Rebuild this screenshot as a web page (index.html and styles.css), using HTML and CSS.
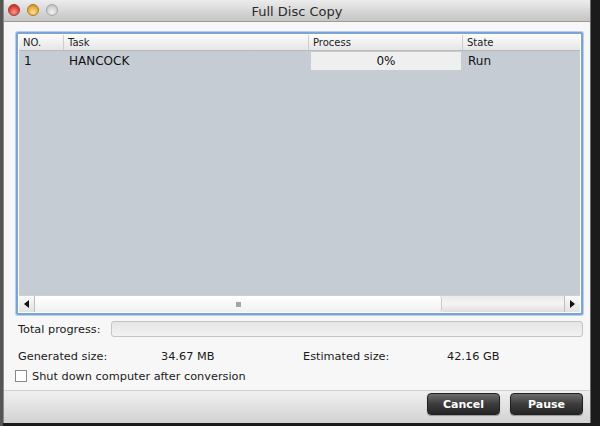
FILE: index.html
```html
<!DOCTYPE html>
<html>
<head>
<meta charset="utf-8">
<link rel="stylesheet" href="styles.css">
</head>
<body>
<div class="desk">
  <div class="window">
    <div class="titlebar">
      <div class="lights">
        <span class="light red"></span>
        <span class="light yellow"></span>
        <span class="light gray"></span>
      </div>
      <div class="title">Full Disc Copy</div>
    </div>
    <div class="content">
      <div class="tableframe">
        <div class="table">
          <div class="thead">
            <div class="th c-no">NO.</div>
            <div class="th c-task">Task</div>
            <div class="th c-proc">Process</div>
            <div class="th c-state">State</div>
          </div>
          <div class="row">
            <div class="td c-no">1</div>
            <div class="td c-task">HANCOCK</div>
            <div class="td c-proc"><div class="pcell">0%</div></div>
            <div class="td c-state">Run</div>
          </div>
          <div class="tbody-fill"></div>
          <div class="hscroll">
            <div class="sarrow left"><span class="tri-l"></span></div>
            <div class="track">
              <div class="thumb"><span class="grip"></span></div>
              <div class="rest"></div>
            </div>
            <div class="sarrow right"><span class="tri-r"></span></div>
          </div>
        </div>
      </div>
      <div class="progress-row">
        <span class="label">Total progress:</span>
        <div class="pbar"></div>
      </div>
      <div class="sizes">
        <span class="s-label">Generated size:</span>
        <span class="s-val">34.67 MB</span>
        <span class="s-label2">Estimated size:</span>
        <span class="s-val2">42.16 GB</span>
      </div>
      <label class="check-row">
        <span class="checkbox"></span>
        <span>Shut down computer after conversion</span>
      </label>
    </div>
    <div class="footer">
      <button class="btn">Cancel</button>
      <button class="btn">Pause</button>
    </div>
  </div>
</div>
</body>
</html>
```
FILE: styles.css
```css
html, body {
  margin: 0;
  padding: 0;
  width: 600px;
  height: 426px;
  overflow: hidden;
  background: #2a2a2a;
  font-family: "DejaVu Sans", sans-serif;
  font-size: 11.3px;
  color: #1a1a1a;
}
.desk {
  display: flex;
  padding-left: 3px;
  height: 426px;
  background: linear-gradient(90deg, #555 0, #555 3px, #1b1b1b 3px);
}
.window {
  width: 588px;
  height: 423px;
  display: flex;
  flex-direction: column;
  background: #f6f6f6;
  border-left: 1px solid #8a8a8a;
  border-right: 1px solid #6a6a6a;
  box-sizing: border-box;
}
.titlebar {
  height: 22px;
  flex: none;
  position: relative;
  display: flex;
  align-items: center;
  justify-content: center;
  background: linear-gradient(#ececec, #d4d4d4 60%, #c6c6c6);
  border-bottom: 1px solid #9a9a9a;
  box-sizing: border-box;
}
.lights {
  position: absolute;
  left: 4px;
  top: 4px;
  display: flex;
  gap: 7px;
}
.light {
  width: 12px;
  height: 12px;
  border-radius: 50%;
  box-sizing: border-box;
}
.red { background: radial-gradient(circle at 50% 70%, #ff9a8a, #d8423a 60%, #a82a24); border: 1px solid #a23a35; }
.yellow { background: radial-gradient(circle at 50% 70%, #ffe29a, #e5a93a 60%, #b67f1d); border: 1px solid #ad7a24; }
.gray { background: radial-gradient(circle at 50% 70%, #f2f2f2, #cfcfcf 60%, #b2b2b2); border: 1px solid #a5a5a5; }
.title {
  font-size: 13px;
  color: #2b2b2b;
  padding-top: 1px;
}
.content {
  flex: 1;
  display: flex;
  flex-direction: column;
  padding: 10px 7px 0 12px;
  background: #f7f7f7;
}
.tableframe {
  height: 283px;
  border: 2px solid #7aa3d6;
  border-radius: 2px;
  box-shadow: 0 0 0 1px #b8cfec;
  padding: 1px;
  background: #fff;
  box-sizing: border-box;
}
.table {
  height: 100%;
  display: flex;
  flex-direction: column;
  background: #c6ccd3;
}
.thead {
  height: 15px;
  display: flex;
  background: linear-gradient(#fbfbfb, #e6e6e6);
  border-bottom: 1px solid #b9b9b9;
  flex: none;
}
.th {
  font-size: 10px;
  padding-left: 4px;
  line-height: 15px;
  color: #222;
  border-right: 1px solid #cdcdcd;
  box-sizing: border-box;
}
.c-no { width: 45px; flex: none; }
.c-task { width: 245px; flex: none; }
.c-proc { width: 154px; flex: none; }
.c-state { flex: 1; border-right: none; }
.row {
  height: 20px;
  display: flex;
  flex: none;
  align-items: center;
}
.td {
  font-size: 12px;
  padding-left: 5px;
  box-sizing: border-box;
  color: #111;
}
.row .c-task { padding-left: 5px; }
.row .c-proc { padding: 0 2px 0 2px; height: 20px; display: flex; align-items: center; }
.pcell {
  flex: 1;
  height: 18px;
  line-height: 18px;
  background: #efefef;
  text-align: center;
}
.tbody-fill { flex: 1; }
.hscroll {
  height: 16px;
  flex: none;
  display: flex;
  background: #f4f4f4;
  border-top: 1px solid #d0d0d0;
}
.sarrow {
  width: 15px;
  flex: none;
  display: flex;
  align-items: center;
  justify-content: center;
  background: linear-gradient(#fafafa, #e2e2e2);
}
.sarrow.left { border-right: 1px solid #bdbdbd; }
.sarrow.right { border-left: 1px solid #bdbdbd; }
.tri-l { width: 0; height: 0; border-top: 4px solid transparent; border-bottom: 4px solid transparent; border-right: 5px solid #111; }
.tri-r { width: 0; height: 0; border-top: 4px solid transparent; border-bottom: 4px solid transparent; border-left: 5px solid #111; }
.track { flex: 1; display: flex; }
.thumb {
  width: 406px;
  background: linear-gradient(#ffffff, #f1f1f1);
  border-right: 1px solid #c9c9c9;
  border-radius: 0 3px 3px 0;
  display: flex;
  align-items: center;
  justify-content: center;
}
.grip { width: 5px; height: 5px; background: #a5a5a5; }
.rest { flex: 1; background: linear-gradient(#ebebeb, #f7f3f3 50%, #e3dddd); }
.progress-row {
  display: flex;
  align-items: center;
  margin-top: 5px;
  height: 18px;
}
.label { width: 93px; flex: none; padding-left: 2px; }
.pbar {
  flex: 1;
  height: 16px;
  border: 1px solid #c4c4c4;
  border-radius: 3px;
  background: linear-gradient(#e6e6e6, #f2f2f2);
  box-sizing: border-box;
}
.sizes {
  display: flex;
  margin-top: 11px;
  padding-left: 2px;
  height: 15px;
  align-items: center;
}
.s-label { width: 143px; flex: none; }
.s-val { width: 142px; flex: none; }
.s-label2 { width: 144px; flex: none; }
.check-row {
  display: flex;
  align-items: center;
  gap: 5px;
  margin-top: 5px;
  height: 14px;
  margin-left: -1px;
}
.checkbox {
  width: 12px;
  height: 12px;
  border: 1px solid #8a8a8a;
  background: #fff;
  box-sizing: border-box;
}
.footer {
  height: 33px;
  flex: none;
  display: flex;
  justify-content: flex-end;
  align-items: flex-start;
  gap: 10px;
  padding: 2px 7px 0 0;
  border-top: 1px solid #cfcfcf;
  background: linear-gradient(#f0f0f0, #d2d2d2);
  box-sizing: border-box;
}
.btn {
  width: 73px;
  height: 22px;
  border: 1px solid #222;
  border-radius: 4px;
  background: linear-gradient(#6d6d6d, #3c3c3c 50%, #262626);
  color: #fff;
  font-family: "DejaVu Sans", sans-serif;
  font-size: 11px;
  font-weight: bold;
  padding: 0;
  box-shadow: 0 1px 1px rgba(0,0,0,0.3);
}
```
